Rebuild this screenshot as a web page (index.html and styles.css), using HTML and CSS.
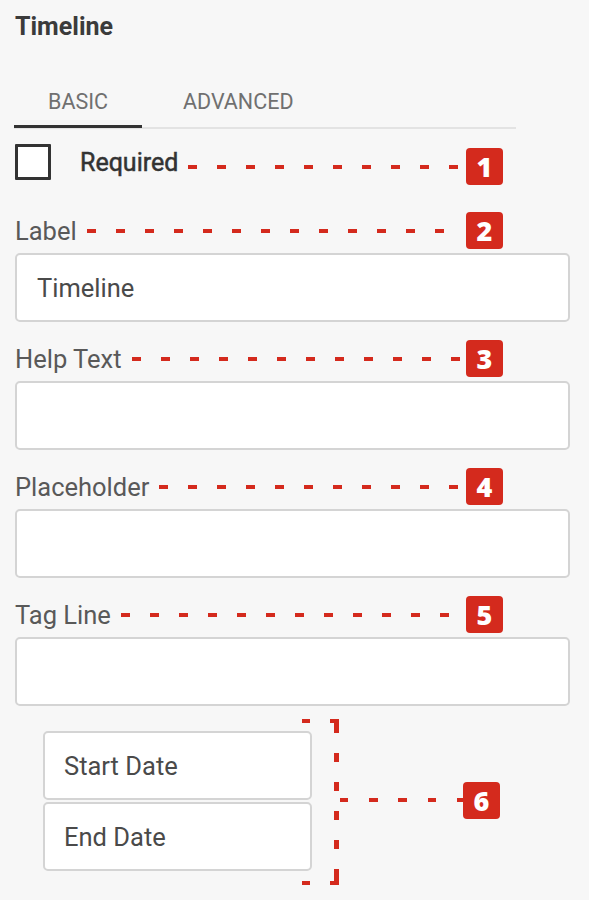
FILE: index.html
```html
<!DOCTYPE html>
<html>
<head>
<meta charset="utf-8">
<link rel="stylesheet" href="styles.css">
</head>
<body>
<div class="panel">
  <h1 class="title">Timeline</h1>
  <div class="tabs">
    <div class="tab active">BASIC</div>
    <div class="tab tab-adv">ADVANCED</div>
  </div>

  <div class="row-check">
    <span class="checkbox"></span>
    <span class="check-label">Required</span>
    <span class="leader leader-check"></span>
    <span class="badge badge-check">1</span>
  </div>

  <div class="field field-first">
    <div class="row"><span class="label">Label</span><span class="leader"></span><span class="badge">2</span></div>
    <div class="input">Timeline</div>
  </div>
  <div class="field">
    <div class="row"><span class="label">Help Text</span><span class="leader"></span><span class="badge">3</span></div>
    <div class="input"></div>
  </div>
  <div class="field">
    <div class="row"><span class="label">Placeholder</span><span class="leader"></span><span class="badge">4</span></div>
    <div class="input"></div>
  </div>
  <div class="field">
    <div class="row"><span class="label">Tag Line</span><span class="leader"></span><span class="badge">5</span></div>
    <div class="input"></div>
  </div>

  <div class="dates-group">
    <div class="dates">
      <div class="input date">Start Date</div>
      <div class="input date">End Date</div>
    </div>
    <div class="bracket">
      <svg class="bracket-svg" width="161" height="166" viewBox="0 0 161 166">
        <g fill="#d42a1d">
          <rect x="0" y="0" width="8" height="4"/>
          <rect x="28" y="0" width="9" height="4"/>
          <rect x="32" y="0" width="5" height="14"/>
          <rect x="32" y="34" width="5" height="9"/>
          <rect x="32" y="63" width="5" height="9"/>
          <rect x="32" y="92" width="5" height="9"/>
          <rect x="32" y="121" width="5" height="9"/>
          <rect x="32" y="150" width="5" height="16"/>
          <rect x="28" y="162" width="9" height="4"/>
          <rect x="0" y="162" width="8" height="4"/>
          <rect x="38" y="79" width="8" height="4"/>
          <rect x="67" y="79" width="9" height="4"/>
          <rect x="96" y="79" width="9" height="4"/>
          <rect x="126" y="79" width="8" height="4"/>
          <rect x="155" y="79" width="6" height="4"/>
        </g>
      </svg>
      <span class="badge">6</span>
    </div>
  </div>
</div>
</body>
</html>
```

FILE: styles.css
```css
* { box-sizing: border-box; }

body {
  margin: 0;
  background: #f7f7f7;
  font-family: Roboto, "Liberation Sans", Arial, sans-serif;
}

.panel {
  padding: 12px 19px 0 15px;
}

.title {
  margin: 0;
  font-size: 25px;
  font-weight: 700;
  line-height: 30px;
  color: #3b3b3b;
}

.tabs {
  display: flex;
  margin-top: 37px;
  margin-left: -1px;
  width: 502px;
  border-bottom: 2px solid #e3e3e3;
}

.tab {
  height: 46px;
  line-height: 46px;
  font-size: 21.5px;
  color: #707070;
  padding: 0 34px;
}

.tab.active {
  height: 49px;
  border-bottom: 3px solid #333;
  margin-bottom: -1px;
}

.tab-adv {
  padding-left: 41px;
}

.row-check {
  display: flex;
  align-items: flex-start;
  margin-top: 15px;
  width: 488px;
  height: 41px;
}

.checkbox {
  width: 36px;
  height: 36px;
  border: 3px solid #333;
  background: #fff;
  border-radius: 1px;
  flex: none;
}

.check-label {
  margin-left: 29px;
  font-size: 25px;
  font-weight: 400;
  -webkit-text-stroke: 0.5px #333;
  line-height: 38px;
  color: #333;
}

.leader {
  flex: 1;
  height: 4px;
  margin: 0 3px 0 10px;
  background: repeating-linear-gradient(90deg, #d42a1d 0 9px, transparent 9px 29px);
}

.leader-check {
  margin-top: 21px;
}

.badge {
  flex: none;
  width: 37px;
  height: 37px;
  border-radius: 4px;
  background: #d42a1d;
  color: #fff;
  font-family: "Open Sans", Inter, sans-serif;
  font-weight: 800;
  font-size: 27px;
  line-height: 37px;
  text-align: center;
}

.badge-check {
  margin-top: 4px;
}

.field {
  margin-top: 18px;
}

.field-first {
  margin-top: 27px;
}

.row {
  display: flex;
  align-items: center;
  width: 488px;
  height: 37px;
}

.label {
  font-size: 25.5px;
  color: #595959;
}

.input {
  margin-top: 4px;
  height: 69px;
  border: 2px solid #d4d4d4;
  border-radius: 5px;
  background: #fff;
  padding-left: 20px;
  display: flex;
  align-items: center;
  font-size: 25.5px;
  color: #4a4a4a;
}

.dates-group {
  display: flex;
  margin-top: 13px;
}

.dates {
  margin-left: 28px;
  width: 269px;
  padding-top: 12px;
}

.date {
  margin-top: 0;
  padding-left: 19px;
}

.date + .date {
  margin-top: 2px;
}

.bracket {
  display: flex;
  align-items: center;
  margin-left: -10px;
}

.bracket-svg {
  display: block;
}

.bracket .badge {
  margin-top: -4px;
}
```
